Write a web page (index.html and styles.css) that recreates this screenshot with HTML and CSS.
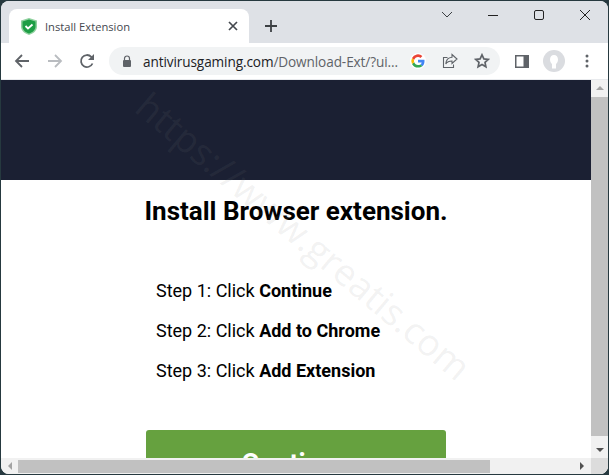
FILE: index.html
```html
<!DOCTYPE html>
<html lang="en">
<head>
<meta charset="utf-8">
<title>Install Extension</title>
<link rel="stylesheet" href="styles.css">
</head>
<body>
<div class="window">
  <div class="tabstrip">
    <div class="tab">
      <svg class="favicon" width="16" height="17" viewBox="0 0 16 17"><path d="M8 0 16 2.500v6c0 4-3.300 7-8 8.500-4.700-1.500-8-4.500-8-8.500v-6z" fill="#8fd19e"/><path d="M8 1.500 14.500 3.500v5c0 3.300-2.700 5.800-6.500 7-3.800-1.200-6.500-3.700-6.500-7v-5z" fill="#1e9e45"/><path d="M4.500 8 7 10.500l4.500-4" fill="none" stroke="#fff" stroke-width="1.800"/></svg>
      <span class="tab-title">Install Extension</span>
      <svg class="tab-close" width="10" height="10" viewBox="0 0 10 10"><path d="M1 1l8 8M9 1l-8 8" stroke="#45494f" stroke-width="1.700"/></svg>
    </div>
    <svg class="new-tab" width="14" height="14" viewBox="0 0 14 14"><path d="M7 1v12M1 7h12" stroke="#3c4043" stroke-width="1.800"/></svg>
    <div class="win-controls">
      <svg width="12" height="8" viewBox="0 0 12 8"><path d="M1 1l5 5 5-5" fill="none" stroke="#3c4043" stroke-width="1"/></svg>
      <svg width="12" height="12" viewBox="0 0 12 12"><path d="M1 6.500h10" stroke="#222" stroke-width="1"/></svg>
      <svg width="12" height="12" viewBox="0 0 12 12"><rect x="1.500" y="1.500" width="9" height="9" rx="1.500" fill="none" stroke="#222" stroke-width="1"/></svg>
      <svg width="12" height="12" viewBox="0 0 12 12"><path d="M1 1l10 10M11 1 1 11" stroke="#222" stroke-width="1"/></svg>
    </div>
  </div>
  <div class="toolbar">
    <svg class="nav back" width="16" height="16" viewBox="0 0 16 16"><path d="M15 8H2M8 2 2 8l6 6" fill="none" stroke="#5f6368" stroke-width="1.800"/></svg>
    <svg class="nav" width="16" height="16" viewBox="0 0 16 16"><path d="M1 8h13M8 2l6 6-6 6" fill="none" stroke="#b9bcc0" stroke-width="1.800"/></svg>
    <svg class="nav" width="16" height="16" viewBox="0 0 16 16"><path d="M13.500 10.500A6 6 0 1 1 12.300 3.800L14.500 6" fill="none" stroke="#5f6368" stroke-width="1.800"/><path d="M15 1v6H9z" fill="#5f6368"/></svg>
    <div class="omnibox">
      <svg class="lock" width="10" height="12" viewBox="0 0 10 12"><path d="M2.500 5V3.500a2.500 2.500 0 0 1 5 0V5" fill="none" stroke="#5f6368" stroke-width="1.200"/><rect x="1" y="5" width="8" height="7" rx="1" fill="#5f6368"/></svg>
      <span class="url">antivirusgaming.com<span class="url-path">/Download-Ext/?ui...</span></span>
      <svg class="g" width="16" height="16" viewBox="0 0 16 16"><circle cx="8" cy="8" r="8" fill="#fff"/><path d="M14.500 8.200c0-.5 0-1-.1-1.400H8v2.700h3.700c-.2.900-.7 1.600-1.400 2.100l2.100 1.600c1.300-1.100 2.100-2.800 2.100-5z" fill="#4285f4"/><path d="M8 14.600c1.800 0 3.200-.6 4.400-1.600l-2.100-1.600c-.6.400-1.400.7-2.300.7-1.800 0-3.200-1.200-3.800-2.800L2 10.900c1.100 2.200 3.300 3.700 6 3.700z" fill="#34a853"/><path d="M4.200 9.300a4 4 0 0 1 0-2.600L2 5.100a6.700 6.700 0 0 0 0 5.800z" fill="#fbbc05"/><path d="M8 4c1 0 1.800.3 2.500 1l1.900-1.900A6.600 6.600 0 0 0 2 5.100l2.200 1.600C4.800 5.200 6.200 4 8 4z" fill="#ea4335"/></svg>
      <svg class="share" width="16" height="16" viewBox="0 0 16 16"><path d="M10 1.500 15 6l-5 4.500V8C7 8 5 9 3.800 11 4 7.500 6 4.700 10 4.300z" fill="none" stroke="#5f6368" stroke-width="1.100"/><path d="M5.500 4.500h-4v10h10v-3" fill="none" stroke="#5f6368" stroke-width="1.100"/></svg>
      <svg class="star" width="16" height="16" viewBox="0 0 16 16"><path d="m8 1.800 1.900 4.100 4.400.5-3.300 3 .9 4.400L8 11.600l-3.900 2.200.9-4.400-3.300-3 4.400-.5z" fill="none" stroke="#5f6368" stroke-width="1.700"/></svg>
    </div>
    <svg class="side" width="14" height="13" viewBox="0 0 14 13"><rect width="14" height="13" fill="#5f6368"/><rect x="1.500" y="1.500" width="7" height="10" fill="#fff"/></svg>
    <svg class="avatar" width="22" height="22" viewBox="0 0 22 22"><circle cx="11" cy="11" r="11" fill="#dadce0"/><path d="M11 5c2.500 0 4 2 4 4.500 0 2-1 3.500-2 4.500v4.500H9V14c-1-1-2-2.500-2-4.500C7 7 8.500 5 11 5z" fill="#fff"/></svg>
    <svg class="menu" width="4" height="14" viewBox="0 0 4 14"><circle cx="2" cy="2" r="1.500" fill="#5f6368"/><circle cx="2" cy="7" r="1.500" fill="#5f6368"/><circle cx="2" cy="12" r="1.500" fill="#5f6368"/></svg>
  </div>
  <div class="viewport">
    <main class="page">
      <div class="hero"></div>
      <h1 class="title">Install Browser extension.</h1>
      <ol class="steps">
        <li>Step 1: Click <b>Continue</b></li>
        <li>Step 2: Click <b>Add to Chrome</b></li>
        <li>Step 3: Click <b>Add Extension</b></li>
      </ol>
      <div class="cta">Continue</div>
      <div class="watermark">https://www.greatis.com</div>
    </main>
    <div class="vscroll">
      <span class="arrow up"></span>
      <span class="vthumb"></span>
      <span class="arrow down"></span>
    </div>
  </div>
  <div class="hscroll">
    <span class="harrow left"></span>
    <span class="hthumb"></span>
    <span class="harrow right"></span>
    <span class="corner"></span>
  </div>
</div>
</body>
</html>
```
FILE: styles.css
```css
* { box-sizing: border-box; }
html, body { margin: 0; height: 100%; overflow: hidden; background: #26393f; }
.window {
  width: 607px;
  height: 473px;
  margin: 1px 0 0 1px;
  background: #fff;
  border-radius: 8px;
  overflow: hidden;
  display: flex;
  flex-direction: column;
  font-family: "Roboto", sans-serif;
}
.tabstrip {
  height: 42px;
  flex: none;
  background: #dee1e6;
  display: flex;
  align-items: flex-end;
  padding-left: 8px;
}
.tab {
  width: 240px;
  height: 34px;
  background: #fff;
  border-radius: 8px 8px 0 0;
  display: flex;
  align-items: center;
  padding: 0 10px 0 12px;
}
.favicon { flex: none; margin-right: 8px; }
.tab-title { flex: 1; font: 11.2px "Open Sans", sans-serif; color: #45494f; }
.tab-close { flex: none; margin-right: 1px; }
.new-tab { margin: 0 0 10px 15px; flex: none; }
.win-controls {
  margin-left: auto;
  align-self: flex-start;
  display: flex;
  align-items: center;
  gap: 34px;
  padding: 8px 17px 0 0;
}
.win-controls svg { flex: none; }
.toolbar {
  height: 37px;
  flex: none;
  background: #fff;
  border-bottom: 1px solid #e8eaed;
  display: flex;
  align-items: center;
  padding-left: 13px;
}
.nav { flex: none; margin-right: 16px; }
.nav.back { margin-right: 17px; }
.omnibox {
  width: 391px;
  height: 28px;
  margin-left: -2px;
  background: #f1f3f4;
  border-radius: 14px;
  display: flex;
  align-items: center;
  padding-left: 13px;
  flex: none;
}
.lock { flex: none; margin-right: 11px; }
.url { font: 13.6px "Open Sans", sans-serif; color: #202124; white-space: nowrap; width: 255px; flex: none; letter-spacing: -.1px; margin-right: 12px; }
.url-path { color: #5f6368; }
.g, .share, .star { flex: none; }
.g, .share { margin-right: 16px; }
.side { flex: none; margin-left: 15px; }
.avatar { flex: none; margin-left: 14px; }
.menu { flex: none; margin-left: 20px; }
.viewport { flex: 1; min-height: 0; display: flex; }
.page { position: relative; flex: 1; min-width: 0; overflow: hidden; background: #fff; color: #000; }
.hero { height: 100px; background: #1b2033; }
.title { margin: 16px 0 0; font-size: 26px; line-height: 30px; font-weight: 700; text-align: center; white-space: nowrap; }
.steps { list-style: none; margin: 45px 0 0; padding: 0 0 0 155px; font-size: 18px; }
.steps li { height: 40px; line-height: 40px; }
.steps b { font-weight: 700; }
.cta {
  margin: 39px 0 0 145px;
  width: 300px;
  height: 60px;
  background: #66a13f;
  border-radius: 3px;
  color: #fff;
  font-size: 27px;
  font-weight: 700;
  line-height: 68px;
  text-align: center;
}
.watermark {
  position: absolute;
  left: 92px;
  top: 130px;
  font: 37px "Open Sans", sans-serif;
  color: rgba(128,128,128,.11);
  white-space: nowrap;
  transform: rotate(40deg);
  pointer-events: none;
}
.vscroll {
  width: 17px;
  flex: none;
  background: #f1f1f1;
  display: flex;
  flex-direction: column;
  align-items: center;
  padding: 6px 0;
}
.arrow { width: 0; height: 0; border-left: 4px solid transparent; border-right: 4px solid transparent; flex: none; }
.arrow.up { border-bottom: 4px solid #a3a3a3; margin-bottom: 7px; }
.arrow.down { border-top: 4px solid #505050; margin-top: 6px; }
.vthumb { width: 100%; flex: 1; background: #c1c1c1; margin-bottom: 6px; }
.hscroll { height: 16px; flex: none; background: #f1f1f1; display: flex; align-items: center; padding-left: 7px; }
.harrow { width: 0; height: 0; border-top: 4px solid transparent; border-bottom: 4px solid transparent; flex: none; }
.harrow.left { border-right: 4px solid #a3a3a3; }
.hthumb { width: 472px; height: 13px; background: #c1c1c1; margin-left: 6px; flex: none; }
.harrow.right { border-left: 4px solid #505050; margin-left: 90px; }
.corner { width: 17px; height: 16px; background: #dcdcdc; margin-left: auto; flex: none; }
```
